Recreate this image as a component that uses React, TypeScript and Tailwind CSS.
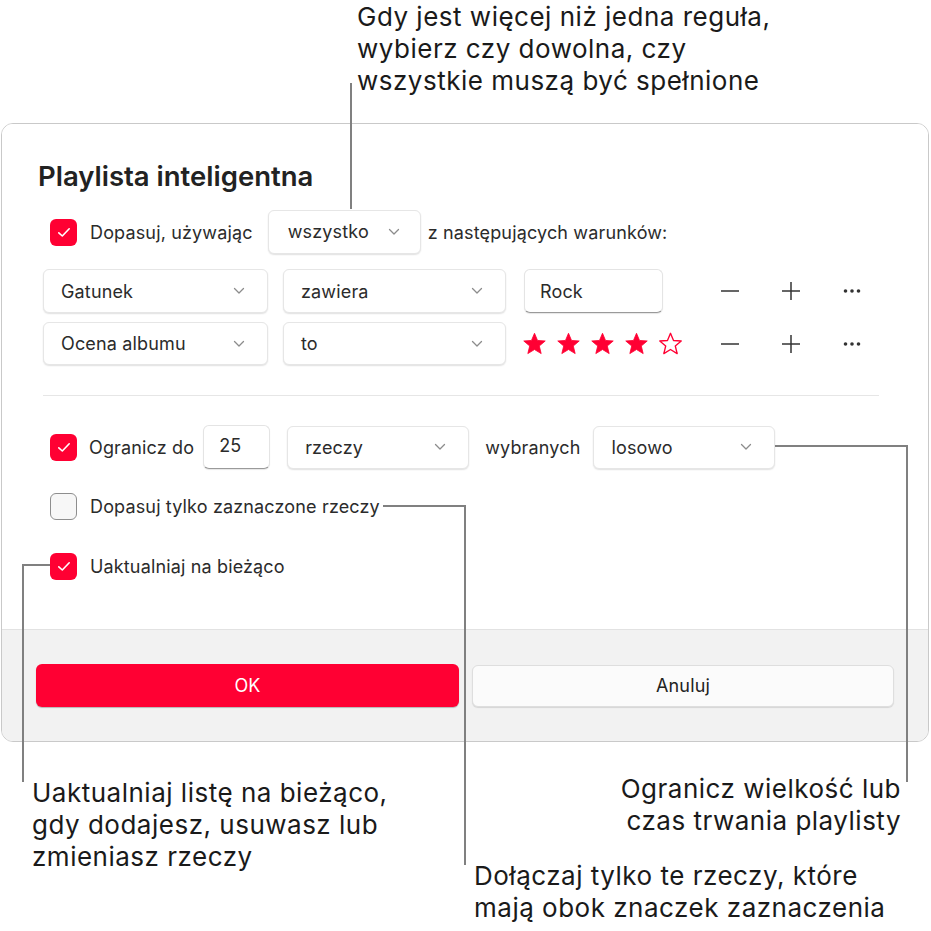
import React from "react";

const RED = "#ff0033";

function Chevron() {
  return (
    <svg width="12" height="8" viewBox="0 0 12 8" className="shrink-0">
      <polyline points="1.5,1.5 6,6 10.5,1.5" fill="none" stroke="#8c8c8c" strokeWidth="1.3" strokeLinecap="round" strokeLinejoin="round" />
    </svg>
  );
}

function Select({ label, className }: { label: string; className: string }) {
  return (
    <div
      className={`flex items-center justify-between rounded-[6px] border border-[#e6e6e6] bg-white pl-[17px] pr-[22px] shadow-[0_1px_1.5px_rgba(0,0,0,0.12)] ${className}`}
    >
      <span>{label}</span>
      <Chevron />
    </div>
  );
}

function Field({ value, className }: { value: string; className: string }) {
  return (
    <div
      className={`flex items-start rounded-[6px] border border-[#e4e4e4] border-b-[#9a9a9a] bg-white pt-[8px] shadow-[0_1px_1px_rgba(0,0,0,0.1)] ${className}`}
    >
      {value}
    </div>
  );
}

function Check({ on }: { on: boolean }) {
  if (!on) {
    return <div className="h-[27px] w-[27px] shrink-0 rounded-[6px] border border-[#8e8e8e] bg-[#f7f7f7]" />;
  }
  return (
    <div className="flex h-[27px] w-[27px] shrink-0 items-center justify-center rounded-[6px] bg-[#ff0033]">
      <svg width="14" height="11" viewBox="0 0 14 11">
        <polyline points="1.8,5.8 5.3,9 12.2,1.8" fill="none" stroke="#fff" strokeWidth="1.6" strokeLinecap="round" strokeLinejoin="round" />
      </svg>
    </div>
  );
}

function Star({ filled }: { filled: boolean }) {
  return (
    <svg width="25" height="24" viewBox="0 0 24 23">
      <polygon
        points="12,1.2 14.9,8.1 22.3,8.6 16.6,13.4 18.4,20.7 12,16.8 5.6,20.7 7.4,13.4 1.7,8.6 9.1,8.1"
        fill={filled ? RED : "none"}
        stroke={RED}
        strokeWidth={filled ? 0.8 : 1.3}
        strokeLinejoin="round"
      />
    </svg>
  );
}

function RowTools() {
  return (
    <div className="ml-auto flex items-center">
      <svg width="22" height="22" viewBox="0 0 22 22">
        <line x1="2" y1="11" x2="20" y2="11" stroke="#333" strokeWidth="1.5" />
      </svg>
      <svg width="22" height="22" viewBox="0 0 22 22" className="ml-[39px]">
        <line x1="2" y1="11" x2="20" y2="11" stroke="#333" strokeWidth="1.5" />
        <line x1="11" y1="2" x2="11" y2="20" stroke="#333" strokeWidth="1.5" />
      </svg>
      <svg width="22" height="22" viewBox="0 0 22 22" className="ml-[39px]">
        <circle cx="4.5" cy="11" r="1.8" fill="#333" />
        <circle cx="11" cy="11" r="1.8" fill="#333" />
        <circle cx="17.5" cy="11" r="1.8" fill="#333" />
      </svg>
    </div>
  );
}

export default function App() {
  const note = "font-['Inter',sans-serif] text-[26px] leading-[32px] text-[#1a1a1a] tracking-[0.5px]";
  return (
    <div className="relative h-[931px] w-[931px] overflow-hidden bg-white font-['Inter',sans-serif] text-[18px] tracking-[0.15px] text-[#2b2b2b]">
      {/* top note */}
      <div className={`h-[123px] pl-[357px] pt-[1px] ${note}`}>
        <div>Gdy jest więcej niż jedna reguła,</div>
        <div>wybierz czy dowolna, czy</div>
        <div>wszystkie muszą być spełnione</div>
      </div>

      {/* dialog */}
      <div className="ml-[1px] w-[928px] overflow-hidden rounded-[12px] border-[1.5px] border-[#c9c9c9]">
        <div className="h-[505px] bg-white pl-[41px] pr-[49px] pt-[37px]">
          <div className="-ml-[5px] text-[27.5px] font-semibold leading-[31px] tracking-normal text-[#222]">Playlista inteligentna</div>

          <div className="mt-[18px] flex h-[44px] items-center">
            <div className="ml-[7px]"><Check on /></div>
            <span className="ml-[13px]">Dopasuj, używając</span>
            <div className="ml-[15px] flex h-[44px] w-[153px] items-center justify-between rounded-[6px] border border-[#e6e6e6] bg-white pl-[19px] pr-[20px] shadow-[0_1px_1.5px_rgba(0,0,0,0.12)]">
              <span className="-mt-[2px]">wszystko</span>
              <Chevron />
            </div>
            <span className="ml-[7px]">z następujących warunków:</span>
          </div>

          <div className="mt-[15px] flex h-[44px] items-center">
            <Select label="Gatunek" className="h-[44px] w-[225px]" />
            <Select label="zawiera" className="ml-[15px] h-[44px] w-[223px]" />
            <Field value="Rock" className="ml-[18px] h-[44px] w-[139px] pl-[15px]" />
            <div className="ml-[56px] flex items-center"><RowTools /></div>
          </div>

          <div className="mt-[9px] flex h-[43px] items-center">
            <Select label="Ocena albumu" className="h-[43px] w-[225px]" />
            <Select label="to" className="ml-[15px] h-[43px] w-[223px]" />
            <div className="ml-[16px] flex gap-[9px]">
              <Star filled />
              <Star filled />
              <Star filled />
              <Star filled />
              <Star filled={false} />
            </div>
            <div className="ml-[36px] flex items-center"><RowTools /></div>
          </div>

          <div className="mt-[30px] h-px bg-[#e6e6e6]" />

          <div className="mt-[29px] flex h-[44px] items-center">
            <div className="ml-[7px]"><Check on /></div>
            <span className="ml-[12px]">Ogranicz do</span>
            <Field value="25" className="ml-[9px] h-[44px] w-[67px] shrink-0 pl-[15px] !pt-[6px]" />
            <Select label="rzeczy" className="ml-[17px] h-[43px] w-[182px] shrink-0" />
            <span className="ml-[16px]">wybranych</span>
            <Select label="losowo" className="ml-[13px] h-[43px] w-[182px] shrink-0" />
          </div>

          <div className="mt-[24px] flex h-[27px] items-center">
            <div className="ml-[7px]"><Check on={false} /></div>
            <span className="ml-[13px]">Dopasuj tylko zaznaczone rzeczy</span>
          </div>

          <div className="mt-[33px] flex h-[27px] items-center">
            <div className="ml-[7px]"><Check on /></div>
            <span className="ml-[13px]">Uaktualniaj na bieżąco</span>
          </div>
        </div>

        <div className="flex h-[112px] items-center gap-[13px] border-t border-[#e2e2e2] bg-[#f2f2f2] pl-[34px] pr-[34px]">
          <button className="flex h-[43px] w-[423px] items-center justify-center rounded-[6px] bg-[#ff0033] text-[18px] text-white shadow-[0_1px_1px_rgba(0,0,0,0.25)]">
            OK
          </button>
          <button className="flex h-[42px] w-[422px] items-center justify-center rounded-[6px] border border-[#dedede] bg-[#fbfbfb] text-[18px] text-[#222] shadow-[0_1px_1px_rgba(0,0,0,0.12)]">
            Anuluj
          </button>
        </div>
      </div>

      {/* bottom notes */}
      <div className={`absolute left-[32px] top-[777px] ${note}`}>
        <div>Uaktualniaj listę na bieżąco,</div>
        <div>gdy dodajesz, usuwasz lub</div>
        <div>zmieniasz rzeczy</div>
      </div>
      <div className={`absolute right-[30px] top-[773px] text-right ${note}`}>
        <div>Ogranicz wielkość lub</div>
        <div>czas trwania playlisty</div>
      </div>
      <div className={`absolute left-[474px] top-[860px] ${note}`}>
        <div>Dołączaj tylko te rzeczy, które</div>
        <div>mają obok znaczek zaznaczenia</div>
      </div>

      {/* callout lines */}
      <div className="absolute left-[350px] top-[83px] h-[126px] w-[2px] bg-[#808080]" />
      <div className="absolute left-[22px] top-[564px] h-[2px] w-[28px] bg-[#808080]" />
      <div className="absolute left-[22px] top-[564px] h-[218px] w-[2px] bg-[#808080]" />
      <div className="absolute left-[383px] top-[505px] h-[2px] w-[83px] bg-[#808080]" />
      <div className="absolute left-[464px] top-[505px] h-[360px] w-[2px] bg-[#808080]" />
      <div className="absolute left-[775px] top-[445px] h-[2px] w-[133px] bg-[#808080]" />
      <div className="absolute left-[906px] top-[445px] h-[337px] w-[2px] bg-[#808080]" />
    </div>
  );
}
